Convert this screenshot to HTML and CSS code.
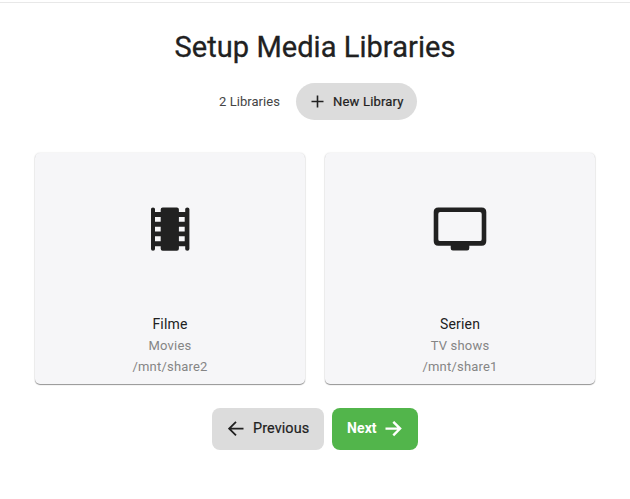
FILE: index.html
```html
<!DOCTYPE html>
<html lang="en">
<head>
  <meta charset="UTF-8" />
  <meta name="viewport" content="width=device-width, initial-scale=1.0"/>
  <title>Setup Media Libraries</title>
  <link rel="stylesheet" href="styles.css">
</head>
<body>
  <div class="page">
    <h1>Setup Media Libraries</h1>
    <div class="toolbar">
      <span class="count">2 Libraries</span>
      <button class="new-library">
        <svg width="13" height="13" viewBox="0 0 13 13"><path d="M6.5 0.5V12.5M0.5 6.5H12.5" stroke="currentColor" stroke-width="1.6" fill="none"/></svg>
        <span>New Library</span>
      </button>
    </div>

    <div class="libraries">
      <div class="card">
        <div class="card-icon">
          <svg width="54" height="44" viewBox="-0.7 0 54 44">
            <path fill="currentColor" fill-rule="evenodd" d="M7.3 2Q7.3 0.4 9.3 0.4T11.3 2V5H17V2.4Q17 0.4 19 0.4H33.2Q35.2 0.4 35.2 2.4V5H41.5V2Q41.5 0.4 43.6 0.4T45.7 2V42Q45.7 43.7 43.6 43.7T41.5 42V39.2H35.2V41.7Q35.2 43.7 33.2 43.7H19Q17 43.7 17 41.7V39.2H11.3V42Q11.3 43.7 9.3 43.7T7.3 42ZM11.3 10V14.8H17V10ZM11.3 19.7V24.5H17V19.7ZM11.3 29.3V34.3H17V29.3ZM35.2 10V14.8H41V10ZM35.2 19.7V24.5H41V19.7ZM35.2 29.3V34.3H41V29.3Z"/>
          </svg>
        </div>
        <div class="card-name">Filme</div>
        <div class="card-info">Movies</div>
        <div class="card-info">/mnt/share2</div>
      </div>
      <div class="card">
        <div class="card-icon">
          <svg width="54" height="44" viewBox="0 0 54 44">
            <path fill="currentColor" fill-rule="evenodd" d="M5.3 0.4H48.7Q53.3 0.4 53.3 5V34Q53.3 38.7 48.7 38.7H36.3V41.3Q36.3 43.5 34.1 43.5H19.9Q17.7 43.5 17.7 41.3V38.7H5.3Q0.7 38.7 0.7 34V5Q0.7 0.4 5.3 0.4ZM7.2 5.1Q5.3 5.1 5.3 7V32.2Q5.3 34.1 7.2 34.1H46.8Q48.7 34.1 48.7 32.2V7Q48.7 5.1 46.8 5.1Z"/>
          </svg>
        </div>
        <div class="card-name">Serien</div>
        <div class="card-info">TV shows</div>
        <div class="card-info">/mnt/share1</div>
      </div>
    </div>

    <div class="actions">
      <button class="previous">
        <svg width="16" height="16" viewBox="0 0.4 16 16"><path d="M15.5 8H1.5M8 1.2L1.2 8L8 14.8" stroke="currentColor" stroke-width="1.8" fill="none"/></svg>
        <span>Previous</span>
      </button>
      <button class="next">
        <span>Next</span>
        <svg width="17" height="16" viewBox="0 0.4 17 16"><path d="M0.5 8H15M8.3 1.2L15.1 8L8.3 14.8" stroke="currentColor" stroke-width="2.4" fill="none"/></svg>
      </button>
    </div>
  </div>
</body>
</html>
```

FILE: styles.css
```css
:root {
  --text-color: #212121;
  --muted-color: #858585;
  --card-color: #f6f6f8;
  --button-color: #dcdcdc;
  --next-color: #52b54b;
}

* {
  box-sizing: border-box;
}

body {
  font-family: Roboto, "Liberation Sans", sans-serif;
  background: #fff;
  color: var(--text-color);
  margin: 0;
}

.page {
  margin-top: 2px;
  border-top: 1px solid #e8e8e8;
  padding: 24px 35px 0;
}

h1 {
  margin: 0;
  font-size: 29px;
  font-weight: 400;
  line-height: 40px;
  letter-spacing: 0.05px;
  text-align: center;
  -webkit-text-stroke: 0.3px currentColor;
}

.toolbar {
  display: flex;
  justify-content: center;
  align-items: center;
  gap: 16px;
  margin-top: 16px;
  padding-left: 6px;
}

.count {
  font-size: 13px;
  letter-spacing: 0.05px;
  color: #444;
}

button {
  display: flex;
  align-items: center;
  border: none;
  font-family: inherit;
  font-weight: 400;
  color: var(--text-color);
  background: var(--button-color);
  cursor: pointer;
  -webkit-text-stroke: 0.2px currentColor;
}

.new-library {
  width: 121px;
  height: 37px;
  padding: 0 0 0 15px;
  gap: 9px;
  border-radius: 19px;
  font-size: 13px;
  letter-spacing: 0.2px;
  white-space: nowrap;
}

.libraries {
  display: grid;
  grid-template-columns: 1fr 1fr;
  gap: 20px;
  margin-top: 33px;
}

.card {
  height: 231px;
  background: var(--card-color);
  border-radius: 5px;
  box-shadow: 0 1px 1px rgba(0, 0, 0, 0.4), 0 0 2px rgba(0, 0, 0, 0.14);
  text-align: center;
  letter-spacing: 0.2px;
}

.card-icon {
  display: flex;
  justify-content: center;
  padding-top: 54px;
  height: 160px;
}

.card-name {
  font-size: 14px;
  line-height: 22px;
}

.card-info {
  font-size: 13px;
  line-height: 21px;
  color: var(--muted-color);
}

.actions {
  display: flex;
  justify-content: center;
  gap: 8px;
  margin-top: 24px;
}

.actions button {
  height: 42px;
  padding-bottom: 2px;
  border-radius: 8px;
  font-size: 14.4px;
  line-height: 16px;
}

.actions .previous {
  width: 112px;
  padding-left: 16px;
  gap: 9px;
  letter-spacing: 0.1px;
  white-space: nowrap;
}

.actions .next {
  width: 86px;
  padding-left: 15px;
  gap: 8px;
  font-weight: 700;
  font-size: 14px;
  letter-spacing: 0.1px;
  color: #fff;
  background: var(--next-color);
  -webkit-text-stroke: 0;
}

.next span {
  padding-bottom: 2px;
}
```
